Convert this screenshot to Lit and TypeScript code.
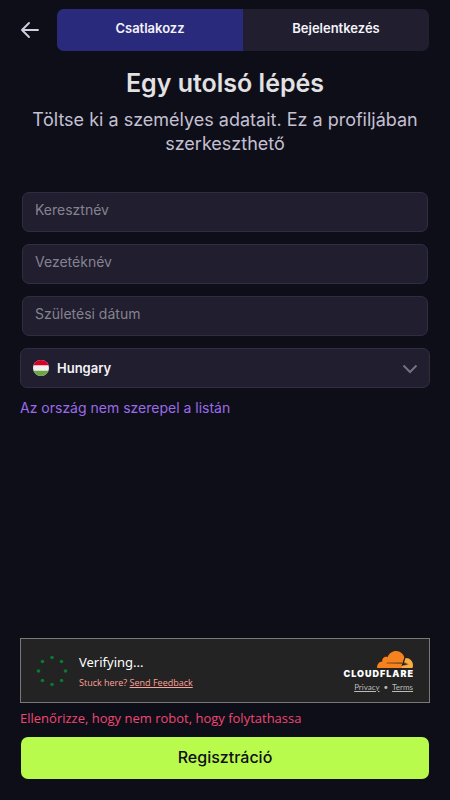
import { LitElement, html, css, svg } from "lit";
import { customElement, state } from "lit/decorators.js";

const FIELDS = [
  { id: "first-name", label: "Keresztnév" },
  { id: "last-name", label: "Vezetéknév" },
  { id: "birth-date", label: "Születési dátum" },
];

const SPINNER_DOTS = Array.from({ length: 8 }, (_, i) => {
  const angle = (i * Math.PI) / 4;
  return { x: 16 + 13.5 * Math.cos(angle), y: 16 + 13.5 * Math.sin(angle) };
});

@customElement("human-check")
export class HumanCheck extends LitElement {
  static styles = css`
    :host {
      display: block;
      font-family: "Noto Sans", "Open Sans", sans-serif;
    }
    .box {
      box-sizing: border-box;
      min-height: 65px;
      display: flex;
      align-items: center;
      padding: 0 16px 0 15px;
      background: #232323;
      border: 1px solid #797979;
    }
    .spinner {
      width: 32px;
      height: 32px;
      flex: none;
      fill: #0a7a30;
    }
    .status {
      flex: 1;
      margin-left: 11px;
      padding-top: 2px;
      display: flex;
      flex-direction: column;
      gap: 4px;
      color: #fff;
      font-size: 13px;
      line-height: 18px;
    }
    .stuck {
      font-family: "Open Sans", sans-serif;
      font-size: 9px;
      line-height: 16px;
      color: #ffa299;
      white-space: nowrap;
    }
    a {
      color: inherit;
      text-underline-offset: 1px;
    }
    .brand {
      padding-top: 2px;
      display: flex;
      flex-direction: column;
      align-items: flex-end;
    }
    .cloud {
      width: 36px;
      height: 17px;
    }
    .wordmark {
      margin: 1px -1px 0 0;
      font: 900 9px/10px Inter, sans-serif;
      letter-spacing: 1px;
      color: #fff;
    }
    .links {
      margin-top: 2px;
      font: 8px/12px Lato, sans-serif;
      color: #bbb;
      white-space: pre;
    }
  `;

  render() {
    return html`
      <div class="box">
        <svg class="spinner" viewBox="0 0 32 32" aria-hidden="true">
          ${SPINNER_DOTS.map((d) => svg`<circle cx=${d.x} cy=${d.y} r="1.8"></circle>`)}
        </svg>
        <div class="status" role="status">
          <span>Verifying...</span>
          <span class="stuck">Stuck here? <a href="#feedback">Send Feedback</a></span>
        </div>
        <div class="brand">
          <svg class="cloud" viewBox="0 0 36 17" aria-hidden="true">
            <path fill="#f6821f" d="M0 17C0 13 2 10.6 5.3 10.4C4.8 7.5 7.7 4.8 10.5 6.2C12 2.5 15.2 0 19 0C23.4 0 26.6 3 27.4 6.6L24.8 17Z"/>
            <path fill="#fbad41" d="M28.3 7.1C32.8 6.8 36 10.3 36 14.3C36 15.4 35.8 16.2 35.4 17H24.6L25.2 14.5L32 13.8L25.9 12.7Z"/>
            <path fill="#8a5020" d="M9.5 11.4L25 11.2L26 12.2L25 13L9.5 12.4Z"/>
            <path fill="#232323" d="M27.4 6.6L28.5 7.1L27 11.4L31 12.2L26.5 13L25.4 15H24.6Z"/>
          </svg>
          <span class="wordmark">CLOUDFLARE</span>
          <span class="links"><a href="#privacy">Privacy</a>  •  <a href="#terms">Terms</a></span>
        </div>
      </div>
    `;
  }
}

@customElement("app-root")
export class AppRoot extends LitElement {
  @state() private tab = "join";

  static styles = css`
    :host {
      box-sizing: border-box;
      min-height: 100vh;
      display: flex;
      flex-direction: column;
      padding: 9px 20px 21px;
      background: #0e0e19;
      color: #f4f3f7;
      font-family: Inter, sans-serif;
      font-size: 14px;
    }
    .top {
      display: flex;
      align-items: center;
      gap: 17px;
    }
    button {
      border: 0;
      padding: 0;
      font: inherit;
      color: inherit;
      background: none;
      cursor: pointer;
    }
    .back {
      width: 20px;
      height: 20px;
      flex: none;
    }
    .back svg {
      display: block;
      fill: none;
      stroke: #d2cede;
      stroke-width: 1.9;
      stroke-linecap: round;
      stroke-linejoin: round;
    }
    .tabs {
      flex: 1;
      display: grid;
      grid-template-columns: 1fr 1fr;
      height: 42px;
      margin-right: 1px;
      border-radius: 7px;
      overflow: hidden;
      background: #201e2f;
    }
    .tab {
      padding-bottom: 4px;
      font-weight: 600;
      font-size: 13px;
    }
    .tab.active {
      background: #2a2a7c;
    }
    .intro {
      margin-top: 16px;
      text-align: center;
    }
    h1 {
      margin: 0;
      font-size: 25px;
      line-height: 32px;
      font-weight: 600;
      color: #e2e1e3;
    }
    .intro p {
      margin: 9px 0 0;
      font-size: 18px;
      line-height: 24px;
      font-weight: 400;
      color: #c4c0d2;
    }
    form {
      flex: 1;
      margin-top: 36px;
      display: flex;
      flex-direction: column;
    }
    .fields {
      display: flex;
      flex-direction: column;
      gap: 12px;
    }
    input,
    select {
      box-sizing: border-box;
      height: 40px;
      border: 1px solid #302d42;
      border-radius: 7px;
      background: #201e2f;
      color: #f4f3f7;
      font: inherit;
    }
    input {
      margin: 0 2px;
      padding: 0 12px 5px;
    }
    input::placeholder {
      color: #86838f;
      opacity: 1;
    }
    .country {
      display: grid;
      position: relative;
    }
    select {
      appearance: none;
      width: 100%;
      padding: 0 40px 1px 36px;
      font-size: 13px;
      font-weight: 600;
    }
    .flag,
    .chevron {
      position: absolute;
      top: 12px;
      pointer-events: none;
    }
    .flag {
      left: 13px;
    }
    .chevron {
      right: 12px;
      fill: none;
      stroke: #747180;
      stroke-width: 2;
    }
    .missing {
      align-self: flex-start;
      margin-top: 10px;
      line-height: 20px;
      color: #9b6be8;
      text-decoration: none;
    }
    .confirm {
      margin-top: auto;
    }
    .error {
      margin: 5px 0 9px;
      font-family: "Open Sans", sans-serif;
      font-size: 13px;
      line-height: 20px;
      color: #ef4770;
    }
    .submit {
      display: block;
      width: calc(100% - 2px);
      height: 42px;
      margin: 0 1px;
      padding-bottom: 2px;
      border-radius: 7px;
      background: #b9fb4c;
      color: #0f0e19;
      font-size: 16px;
      font-weight: 500;
    }
  `;

  private renderTab(id: string, label: string) {
    const active = this.tab === id;
    return html`<button
      class="tab ${active ? "active" : ""}"
      role="tab"
      aria-selected=${active}
      @click=${() => (this.tab = id)}
    >${label}</button>`;
  }

  render() {
    return html`
      <header class="top">
        <button class="back" aria-label="Vissza">
          <svg width="20" height="20" viewBox="0 0 20 20"><path d="M18 10H2M9 3L2 10L9 17"/></svg>
        </button>
        <div class="tabs" role="tablist">
          ${this.renderTab("join", "Csatlakozz")}
          ${this.renderTab("login", "Bejelentkezés")}
        </div>
      </header>
      <section class="intro">
        <h1>Egy utolsó lépés</h1>
        <p>Töltse ki a személyes adatait. Ez a profiljában szerkeszthető</p>
      </section>
      <form @submit=${(e: Event) => e.preventDefault()}>
        <div class="fields">
          ${FIELDS.map(
            (f) => html`<input id=${f.id} type="text" placeholder=${f.label} aria-label=${f.label} />`
          )}
          <div class="country">
            <select aria-label="Ország">
              <option>Hungary</option>
            </select>
            <svg class="flag" width="16" height="16" viewBox="0 0 16 16" aria-hidden="true">
              <clipPath id="disc"><circle cx="8" cy="8" r="8"/></clipPath>
              <g clip-path="url(#disc)">
                <path fill="#f0f0f0" d="M0 0h16v16H0z"/>
                <path fill="#d80027" d="M0 0h16v5.2H0z"/>
                <path fill="#6da544" d="M0 10.8h16V16H0z"/>
              </g>
            </svg>
            <svg class="chevron" width="16" height="16" viewBox="0 0 16 16" aria-hidden="true">
              <path d="M1.5 5.5L8 12L14.5 5.5"/>
            </svg>
          </div>
        </div>
        <a class="missing" href="#country">Az ország nem szerepel a listán</a>
        <div class="confirm">
          <human-check></human-check>
          <p class="error" role="alert">Ellenőrizze, hogy nem robot, hogy folytathassa</p>
          <button class="submit" type="submit">Regisztráció</button>
        </div>
      </form>
    `;
  }
}
